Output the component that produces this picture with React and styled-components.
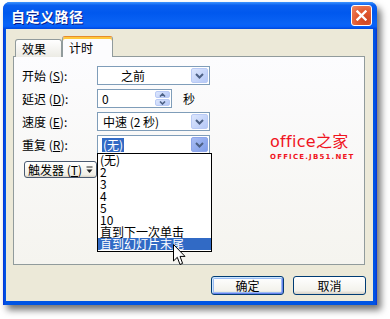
import React from "react";
import styled, { createGlobalStyle, css } from "styled-components";

const GlobalStyle = createGlobalStyle`
  html, body {
    margin: 0;
    padding: 0;
    background: #ffffff;
  }
  body {
    font-family: "Noto Sans CJK SC", "DejaVu Sans", sans-serif;
    font-size: 12px;
    color: #000;
  }
`;

const Chevron = () => (
  <svg width="9" height="6" viewBox="0 0 9 6">
    <path d="M1 1 L4.5 4.5 L8 1" fill="none" stroke="#4d6185" strokeWidth="2" />
  </svg>
);

const SpinArrow = ({ up }) => (
  <svg width="7" height="4" viewBox="0 0 7 4">
    <path
      d={up ? "M1 3.5 L3.5 1 L6 3.5" : "M1 0.5 L3.5 3 L6 0.5"}
      fill="none"
      stroke="#4d6185"
      strokeWidth="1.6"
    />
  </svg>
);

const CloseGlyph = () => (
  <svg width="11" height="11" viewBox="0 0 11 11">
    <path d="M1.5 1.5 L9.5 9.5 M9.5 1.5 L1.5 9.5" stroke="#fff" strokeWidth="2.4" strokeLinecap="square" />
  </svg>
);

const MenuArrow = () => (
  <svg width="7" height="8" viewBox="0 0 7 8">
    <path d="M0.5 1 H6.5" stroke="#222" strokeWidth="1" />
    <path d="M0.5 3.5 H6.5 L3.5 7 Z" fill="#222" />
  </svg>
);

const Cursor = () => (
  <svg width="13" height="22" viewBox="0 0 13 22">
    <path
      d="M0.5 0.5 L0.5 17 L4.3 13.3 L7 20.5 L9.6 19.4 L7 12.4 L12 12.4 Z"
      fill="#fff"
      stroke="#000"
      strokeWidth="1"
    />
  </svg>
);

const Combo = ({ value, width = 113, indent = 3, active }) => (
  <ComboBox style={{ width }}>
    <ComboText $indent={indent}>
      <ComboValue $active={active}>{value}</ComboValue>
    </ComboText>
    <DropButton $active={active}>
      <Chevron />
    </DropButton>
  </ComboBox>
);

const listItems = ["(无)", "2", "3", "4", "5", "10", "直到下一次单击", "直到幻灯片末尾"];

export default function App() {
  return (
    <>
      <GlobalStyle />
      <Stage>
        <Window>
          <TitleBar>
            <Title>自定义路径</Title>
            <CloseButton>
              <CloseGlyph />
            </CloseButton>
          </TitleBar>
          <Body>
            <TabStrip>
              <Tab>效果</Tab>
              <Tab $active>计时</Tab>
            </TabStrip>
            <Panel>
              <Form>
                <Label>
                  开始 (<u>S</u>):
                </Label>
                <Combo value="之前" indent={21} />

                <Label>
                  延迟 (<u>D</u>):
                </Label>
                <Inline>
                  <SpinBox>
                    <SpinText>0</SpinText>
                    <SpinButtons>
                      <SpinButton>
                        <SpinArrow up />
                      </SpinButton>
                      <SpinButton>
                        <SpinArrow />
                      </SpinButton>
                    </SpinButtons>
                  </SpinBox>
                  <Unit>秒</Unit>
                </Inline>

                <Label>
                  速度 (<u>E</u>):
                </Label>
                <Combo value="中速 (2 秒)" />

                <Label>
                  重复 (<u>R</u>):
                </Label>
                <Combo value="(无)" active />
              </Form>

              <TriggerButton>
                <span>
                  触发器 (<u>T</u>)
                </span>
                <MenuArrow />
              </TriggerButton>

              <Watermark>
                <Brand>office之家</Brand>
                <Domain>OFFICE.JB51.NET</Domain>
              </Watermark>

              <DropList>
                {listItems.map((item, i) => (
                  <ListItem key={item} $selected={i === listItems.length - 1}>
                    {item}
                  </ListItem>
                ))}
              </DropList>
            </Panel>
            <Footer>
              <PushButton $default>确定</PushButton>
              <PushButton>取消</PushButton>
            </Footer>
          </Body>
          <CursorSpot>
            <Cursor />
          </CursorSpot>
        </Window>
      </Stage>
    </>
  );
}

const Stage = styled.div`
  width: 390px;
  height: 319px;
  padding: 2px 0 0 3px;
  box-sizing: border-box;
`;

const Window = styled.div`
  position: relative;
  width: 374px;
  height: 303px;
  display: flex;
  flex-direction: column;
  border-radius: 7px 7px 0 0;
  background: linear-gradient(90deg, #0831d9 0, #0054e3 2px, #0054e3 calc(100% - 2px), #0831d9 100%);
  box-shadow: 4px 5px 7px rgba(0, 0, 0, 0.55);
`;

const TitleBar = styled.div`
  height: 27px;
  flex: none;
  display: flex;
  align-items: center;
  justify-content: space-between;
  padding: 0 5px 0 8px;
  border-radius: 7px 7px 0 0;
  background: linear-gradient(
    180deg,
    #3d95ff 0%,
    #0a5fef 12%,
    #0058ee 40%,
    #0a63f5 80%,
    #0660fb 90%,
    #0047dc 100%
  );
`;

const Title = styled.div`
  color: #fff;
  font-size: 14px;
  font-weight: 700;
  letter-spacing: 0.5px;
  text-shadow: 1px 1px 0 #0a1e8c;
`;

const CloseButton = styled.div`
  width: 19px;
  height: 19px;
  display: flex;
  align-items: center;
  justify-content: center;
  border: 1px solid #fff;
  border-radius: 3px;
  background: radial-gradient(circle at 70% 75%, #cc4625 0%, #e2592f 45%, #ef8a68 100%);
`;

const Body = styled.div`
  flex: 1;
  margin: 0 4px 4px 3px;
  padding: 7px 8px 0 7px;
  background: #ece9d8;
  display: flex;
  flex-direction: column;
`;

const TabStrip = styled.div`
  height: 21px;
  display: flex;
  align-items: flex-end;
  padding-left: 2px;
  margin-bottom: -1px;
  position: relative;
  z-index: 1;
`;

const Tab = styled.div`
  box-sizing: border-box;
  width: 47px;
  height: 18px;
  padding: 0 0 0 6px;
  font-size: 12px;
  line-height: 17px;
  border: 1px solid #919b9c;
  border-bottom: none;
  border-radius: 3px 3px 0 0;
  background: linear-gradient(180deg, #ffffff, #ecebe5);
  ${({ $active }) =>
    $active &&
    css`
      width: 51px;
      height: 21px;
      line-height: 18px;
      background: #fcfcfe;
      border-top: 1px solid #e68b2c;
      box-shadow: inset 0 2px 0 #ffc83c;
      padding-top: 2px;
    `}
`;

const Panel = styled.div`
  position: relative;
  height: 209px;
  box-sizing: border-box;
  border: 1px solid #919b9c;
  background: linear-gradient(180deg, #fcfcfe, #f5f4ef);
  padding: 9px 0 0 8px;
`;

const Form = styled.div`
  display: grid;
  grid-template-columns: 75px auto;
  grid-auto-rows: 19px;
  row-gap: 4px;
  align-items: center;
`;

const Label = styled.div`
  font-size: 12px;
  line-height: 19px;
  white-space: nowrap;
  u {
    text-underline-offset: 1px;
  }
`;

const ComboBox = styled.div`
  box-sizing: border-box;
  height: 19px;
  display: flex;
  align-items: stretch;
  border: 1px solid #7f9db9;
  background: #fff;
  padding: 1px;
`;

const ComboText = styled.div`
  flex: 1;
  display: flex;
  align-items: center;
  padding-left: ${({ $indent }) => $indent}px;
  font-size: 12px;
  white-space: nowrap;
`;

const ComboValue = styled.span`
  line-height: 14px;
  padding: 0 1px;
  ${({ $active }) =>
    $active &&
    css`
      background: #316ac5;
      color: #fff;
    `}
`;

const DropButton = styled.div`
  width: 15px;
  display: flex;
  align-items: center;
  justify-content: center;
  border-radius: 2px;
  border: 1px solid #b9caf5;
  background: linear-gradient(135deg, #dce6fd, #b5c8f7);
  ${({ $active }) =>
    $active &&
    css`
      border-color: #8ea6ea;
      background: linear-gradient(135deg, #a9bdf3, #7f9de9);
    `}
`;

const Inline = styled.div`
  display: flex;
  align-items: center;
  gap: 11px;
`;

const SpinBox = styled(ComboBox)`
  width: 75px;
`;

const SpinText = styled.div`
  flex: 1;
  padding-left: 3px;
  font-size: 12px;
  line-height: 15px;
`;

const SpinButtons = styled.div`
  width: 15px;
  display: flex;
  flex-direction: column;
  gap: 1px;
`;

const SpinButton = styled.div`
  flex: 1;
  display: flex;
  align-items: center;
  justify-content: center;
  border-radius: 2px;
  border: 1px solid #b9caf5;
  background: linear-gradient(135deg, #dce6fd, #b5c8f7);
`;

const Unit = styled.span`
  font-size: 12px;
`;

const TriggerButton = styled.div`
  box-sizing: border-box;
  width: 73px;
  height: 17px;
  margin: 7px 0 0 2px;
  display: flex;
  align-items: center;
  gap: 4px;
  padding-left: 3px;
  font-size: 12px;
  line-height: 15px;
  white-space: nowrap;
  overflow: hidden;
  border: 1px solid #4a5a70;
  border-radius: 3px;
  background: linear-gradient(180deg, #ffffff, #f1efe6 85%, #d8d2c6);
`;

const Watermark = styled.div`
  position: absolute;
  left: 256px;
  top: 76px;
  display: flex;
  flex-direction: column;
  align-items: flex-start;
  color: #f0141e;
`;

const Brand = styled.div`
  font-family: "DejaVu Sans", "Noto Sans CJK SC", sans-serif;
  font-size: 16px;
  line-height: 17px;
  letter-spacing: 0.3px;
`;

const Domain = styled.div`
  font-family: "DejaVu Sans", sans-serif;
  font-size: 7px;
  font-weight: 700;
  letter-spacing: 1.2px;
  margin-top: 3px;
`;

const DropList = styled.div`
  position: absolute;
  left: 83px;
  top: 96px;
  width: 115px;
  box-sizing: border-box;
  border: 1px solid #000;
  background: #fff;
  display: flex;
  flex-direction: column;
  padding-bottom: 1px;
  z-index: 2;
`;

const ListItem = styled.div`
  height: 12px;
  line-height: 12px;
  padding-left: 2px;
  font-size: 12px;
  white-space: nowrap;
  ${({ $selected }) =>
    $selected &&
    css`
      background: #316ac5;
      color: #fff;
    `}
`;

const Footer = styled.div`
  display: flex;
  justify-content: flex-end;
  gap: 9px;
  margin: 11px -1px 0 0;
`;

const PushButton = styled.div`
  box-sizing: border-box;
  width: 73px;
  height: 19px;
  display: flex;
  align-items: center;
  justify-content: center;
  font-size: 12px;
  border: 1px solid #003c74;
  border-radius: 3px;
  background: linear-gradient(180deg, #ffffff, #f3f2ec 80%, #d6d0c5);
  ${({ $default }) =>
    $default &&
    css`
      box-shadow: inset 1px 1px 0 #cee7ff, inset -1px -1px 0 #6982ee, inset 0 0 0 2px #9bbcf3;
    `}
`;

const CursorSpot = styled.div`
  position: absolute;
  left: 170px;
  top: 242px;
  z-index: 5;
  line-height: 0;
`;
